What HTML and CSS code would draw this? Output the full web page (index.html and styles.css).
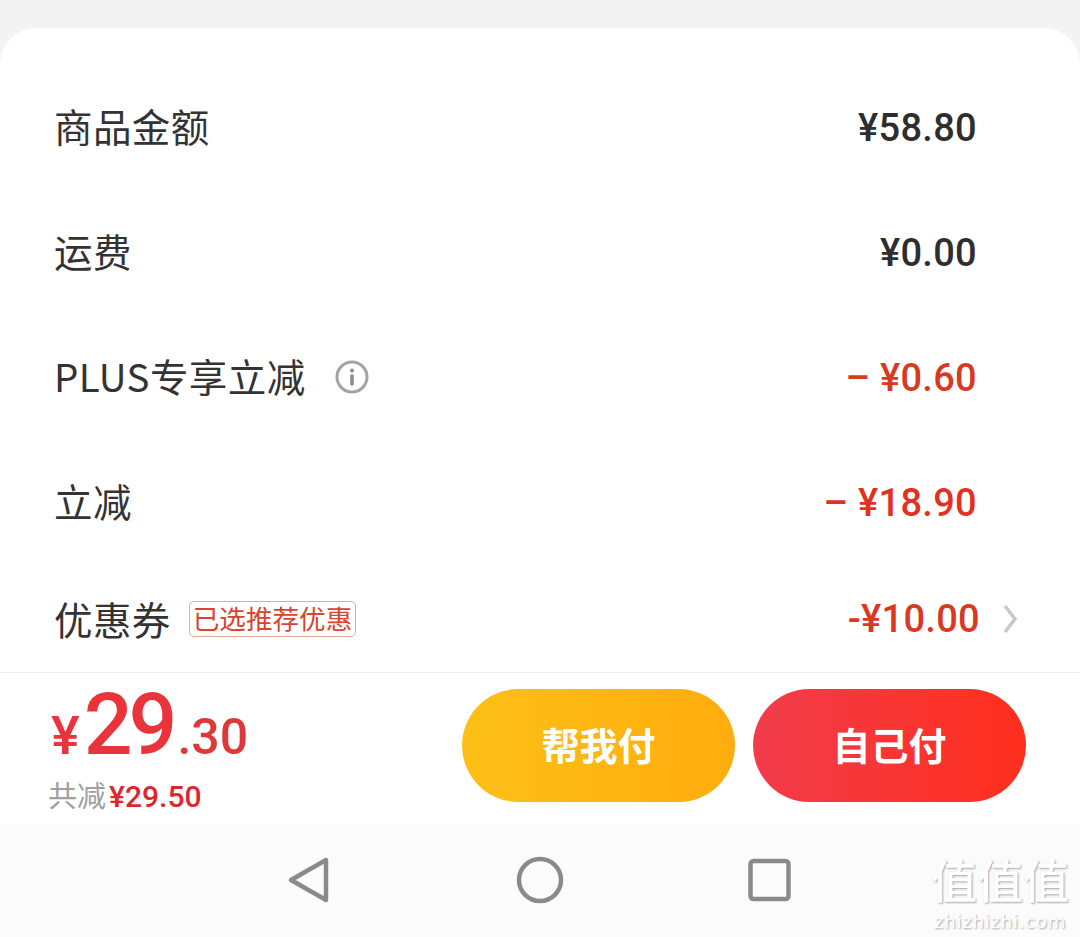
FILE: index.html
```html
<!DOCTYPE html>
<html lang="zh-CN">
<head>
    <meta charset="UTF-8">
    <title>订单结算</title>
    <link rel="stylesheet" href="styles.css">
</head>
<body>
    <div class="sheet">
        <div class="row">
            <span class="label">商品金额</span>
            <span class="amount">¥58.80</span>
        </div>
        <div class="row">
            <span class="label">运费</span>
            <span class="amount">¥0.00</span>
        </div>
        <div class="row">
            <div class="label-group">
                <span class="label">PLUS专享立减</span>
                <svg class="info-icon" viewBox="0 0 34 34">
                    <circle cx="17" cy="17" r="15" fill="none" stroke="#a3a3a3" stroke-width="3"/>
                    <circle cx="17" cy="10.5" r="2" fill="#8c8c8c"/>
                    <rect x="15.2" y="14.5" width="3.6" height="11" rx="1" fill="#8c8c8c"/>
                </svg>
            </div>
            <span class="amount discount">– ¥0.60</span>
        </div>
        <div class="row">
            <span class="label">立减</span>
            <span class="amount discount bright">– ¥18.90</span>
        </div>
        <div class="row coupon-row">
            <div class="label-group">
                <span class="label">优惠券</span>
                <span class="badge">已选推荐优惠</span>
            </div>
            <div class="coupon-value">
                <span class="amount discount">-¥10.00</span>
                <svg class="chevron" viewBox="0 0 16 30">
                    <path d="M3 2 L13 15 L3 28" fill="none" stroke="#c8c8c8" stroke-width="3.5"/>
                </svg>
            </div>
        </div>
    </div>

    <div class="footer">
        <div class="total">
            <div class="total-price">
                <span class="yen">¥</span><span class="big">29</span><span class="cents">.30</span>
            </div>
            <div class="saved">共减<span class="saved-num">¥29.50</span></div>
        </div>
        <div class="actions">
            <button class="pay-btn friend-btn">帮我付</button>
            <button class="pay-btn self-btn">自己付</button>
        </div>
    </div>

    <div class="navbar">
        <svg class="nav-icon" viewBox="0 0 48 48">
            <path d="M40 4 V44 L5 24 Z" fill="none" stroke="#8a8a8a" stroke-width="4.5" stroke-linejoin="round"/>
        </svg>
        <svg class="nav-icon" viewBox="0 0 48 48">
            <circle cx="24" cy="24" r="21" fill="none" stroke="#8a8a8a" stroke-width="4.5"/>
        </svg>
        <svg class="nav-icon" viewBox="0 0 48 48">
            <rect x="4.5" y="5" width="38" height="38" rx="3" fill="none" stroke="#8a8a8a" stroke-width="4.5"/>
        </svg>
    </div>

    <div class="watermark">
        <div class="wm-logo">值值值</div>
        <div class="wm-site">zhizhizhi.com</div>
    </div>
</body>
</html>
```

FILE: styles.css
```css
* {
    box-sizing: border-box;
    margin: 0;
    padding: 0;
}

body {
    width: 1080px;
    height: 937px;
    overflow: hidden;
    position: relative;
    padding-top: 28px;
    background: #f3f3f3;
    font-family: Roboto, "Noto Sans CJK SC", sans-serif;
    color: #333;
}

.sheet {
    height: 644px;
    padding: 37px 103px 0 54px;
    background: white;
    border-radius: 36px 36px 0 0;
}

.row {
    height: 125px;
    display: flex;
    align-items: center;
    justify-content: space-between;
}

.label-group {
    display: flex;
    align-items: center;
}

.label {
    padding-bottom: 5px;
    font-family: "Noto Sans CJK SC", sans-serif;
    font-size: 38.5px;
    letter-spacing: 0.4px;
    color: #333;
}

.amount {
    font-size: 38px;
    font-weight: 500;
    letter-spacing: 0.3px;
    color: #2e2e2e;
}

.discount {
    color: #d8391f;
}

.bright {
    color: #e3301f;
}

.info-icon {
    width: 34px;
    height: 34px;
    margin: 0 0 2px 29px;
}

.coupon-row {
    height: 108px;
    margin-right: -41px;
}

.coupon-row .label {
    padding-bottom: 2px;
}

.badge {
    margin-left: 18px;
    padding: 0 3px;
    height: 36px;
    line-height: 31px;
    font-family: "Noto Sans CJK SC", sans-serif;
    font-size: 26.6px;
    color: #d9432f;
    border: 1px solid #e5a79c;
    border-radius: 5px;
    white-space: nowrap;
}

.coupon-value {
    display: flex;
    align-items: center;
    gap: 22px;
}

.chevron {
    width: 16px;
    height: 30px;
}

.footer {
    height: 153px;
    display: flex;
    justify-content: space-between;
    padding: 16px 54px 0 48px;
    background: white;
    border-top: 1px solid #eeeeee;
}

.total-price {
    height: 72px;
    display: flex;
    align-items: baseline;
    padding-left: 3px;
    color: #e8343a;
    font-weight: 500;
    line-height: 72px;
}

.yen {
    font-size: 54px;
}

.big {
    font-size: 86px;
    letter-spacing: -4px;
    margin-left: 4px;
}

.cents {
    font-size: 50px;
    margin-left: 4px;
    color: #dc3a3a;
}

.saved {
    margin-top: 13px;
    font-family: "Noto Sans CJK SC", sans-serif;
    font-size: 29px;
    line-height: 40px;
    color: #a0a0a0;
    white-space: nowrap;
}

.saved-num {
    font-family: Roboto, sans-serif;
    font-size: 30px;
    font-weight: 500;
    color: #e0262d;
    margin-left: 3px;
}

.actions {
    display: flex;
    gap: 18px;
}

.pay-btn {
    width: 273px;
    height: 113px;
    padding-bottom: 5px;
    border: none;
    border-radius: 57px;
    font-family: "Noto Sans CJK SC", sans-serif;
    font-size: 38px;
    font-weight: 700;
    color: white;
}

.friend-btn {
    background: linear-gradient(90deg, #fdc017 0%, #ffac0e 100%);
}

.self-btn {
    background: linear-gradient(90deg, #f13c4c 0%, #ff2f1c 100%);
}

.navbar {
    height: 112px;
    display: flex;
    align-items: center;
    gap: 182px;
    padding: 0 0 2px 286px;
    background: #fbfbfb;
}

.nav-icon {
    width: 48px;
    height: 48px;
}

.watermark {
    position: absolute;
    left: 926px;
    top: 852px;
    width: 148px;
    text-align: center;
    color: white;
    text-shadow: 1px 1px 2px rgba(0, 0, 0, 0.35);
}

.wm-logo {
    font-family: "Noto Sans CJK SC", sans-serif;
    font-size: 46px;
    font-weight: 500;
    line-height: 52px;
    white-space: nowrap;
}

.wm-site {
    margin-top: 8px;
    font-family: "DejaVu Sans", sans-serif;
    font-size: 18px;
    line-height: 20px;
    letter-spacing: 0.8px;
    white-space: nowrap;
}
```
